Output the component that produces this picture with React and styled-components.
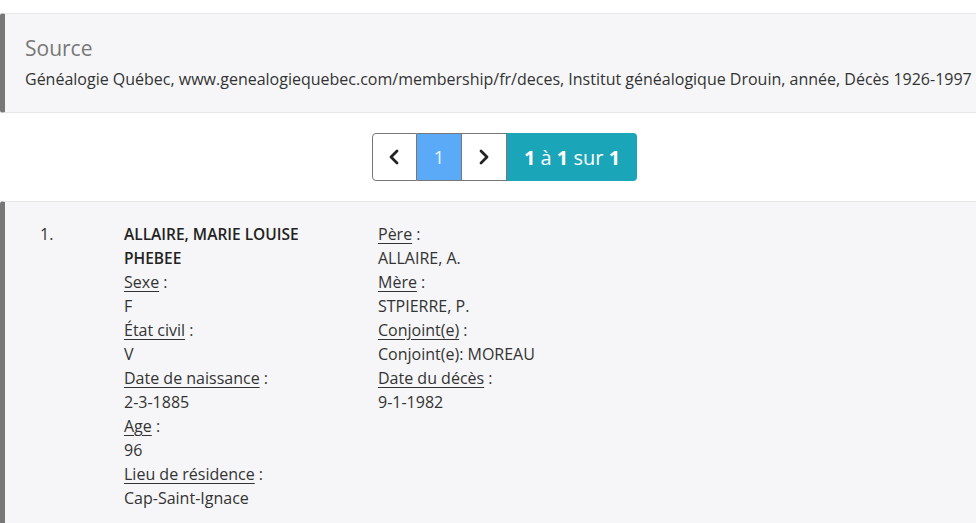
import React from "react";
import styled, { createGlobalStyle } from "styled-components";

const Global = createGlobalStyle`
  html, body { margin: 0; padding: 0; background: #fff; }
  body { font-family: "Open Sans", "Liberation Sans", sans-serif; color: #333; font-size: 16px; }
  * { box-sizing: border-box; }
`;

const Page = styled.div`
  padding-top: 13px;
`;

const Callout = styled.section`
  background: #f6f6f8;
  border-top: 1px solid #e6e6e6;
  border-bottom: 1px solid #e6e6e6;
  border-left: 5px solid #777;
  border-radius: 3px 0 0 3px;
  padding: ${(p) => p.$pad};
`;

const CalloutTitle = styled.h4`
  margin: 0 0 8px;
  font-size: 21px;
  line-height: 24px;
  font-weight: 400;
  color: #777;
`;

const CalloutText = styled.p`
  margin: 0;
  font-size: 16px;
  line-height: 22px;
  color: #333;
  white-space: nowrap;
`;

const PagerWrap = styled.nav`
  display: flex;
  justify-content: center;
  padding: 20px 0 20px 33px;
`;

const PageBtn = styled.div`
  width: 45px;
  height: 48px;
  display: flex;
  align-items: center;
  justify-content: center;
  border: 1px solid #777;
  border-left-width: ${(p) => (p.$first ? "1px" : "0")};
  border-radius: ${(p) => (p.$first ? "4px 0 0 4px" : "0")};
  background: ${(p) => (p.$active ? "#5aaaf8" : "#fff")};
  color: ${(p) => (p.$active ? "#e8f2ff" : "#222")};
  font-size: 19px;
`;

const Info = styled.div`
  height: 48px;
  padding: 0 17px;
  display: flex;
  align-items: center;
  background: #1aa5b8;
  color: #fff;
  font-size: 20px;
  border-radius: 0 4px 4px 0;
  white-space: pre;
  b { font-weight: 700; }
`;

const Record = styled.div`
  display: grid;
  grid-template-columns: 84px 254px 254px;
  font-size: 16px;
  line-height: 24px;
  color: #333;
`;

const Num = styled.div``;

const Col = styled.div`
  display: flex;
  flex-direction: column;
  padding-right: ${(p) => p.$gap || 0}px;
`;

const Name = styled.div`
  font-weight: 600;
  font-size: 15.5px;
  color: #222;
`;

const Label = styled.div`
  span { text-decoration: underline; text-underline-offset: 3px; }
`;

const Chevron = ({ dir }) => (
  <svg width="14" height="16" viewBox="0 0 14 16" fill="none">
    <path
      d={dir === "left" ? "M10 2 L4 8 L10 14" : "M4 2 L10 8 L4 14"}
      stroke="#222"
      strokeWidth="2.8"
      strokeLinecap="round"
      strokeLinejoin="round"
    />
  </svg>
);

const Field = ({ label, value }) => (
  <>
    <Label>
      <span>{label}</span> :
    </Label>
    <div>{value}</div>
  </>
);

export default function App() {
  return (
    <Page>
      <Global />
      <Callout $pad="22px 20px 22px 20px">
        <CalloutTitle>Source</CalloutTitle>
        <CalloutText>
          Généalogie Québec, www.genealogiequebec.com/membership/fr/deces, Institut généalogique Drouin, année, Décès 1926-1997
        </CalloutText>
      </Callout>
      <PagerWrap>
        <PageBtn $first>
          <Chevron dir="left" />
        </PageBtn>
        <PageBtn $active>1</PageBtn>
        <PageBtn>
          <Chevron dir="right" />
        </PageBtn>
        <Info>
          <b>1</b> à <b>1</b> sur <b>1</b>
        </Info>
      </PagerWrap>
      <Callout $pad="20px 20px 14px 35px">
        <Record>
          <Num>1.</Num>
          <Col $gap={24}>
            <Name>ALLAIRE, MARIE LOUISE PHEBEE</Name>
            <Field label="Sexe" value="F" />
            <Field label="État civil" value="V" />
            <Field label="Date de naissance" value="2-3-1885" />
            <Field label="Age" value="96" />
            <Field label="Lieu de résidence" value="Cap-Saint-Ignace" />
          </Col>
          <Col>
            <Field label="Père" value="ALLAIRE, A." />
            <Field label="Mère" value="STPIERRE, P." />
            <Field label="Conjoint(e)" value="Conjoint(e): MOREAU" />
            <Field label="Date du décès" value="9-1-1982" />
          </Col>
        </Record>
      </Callout>
    </Page>
  );
}
